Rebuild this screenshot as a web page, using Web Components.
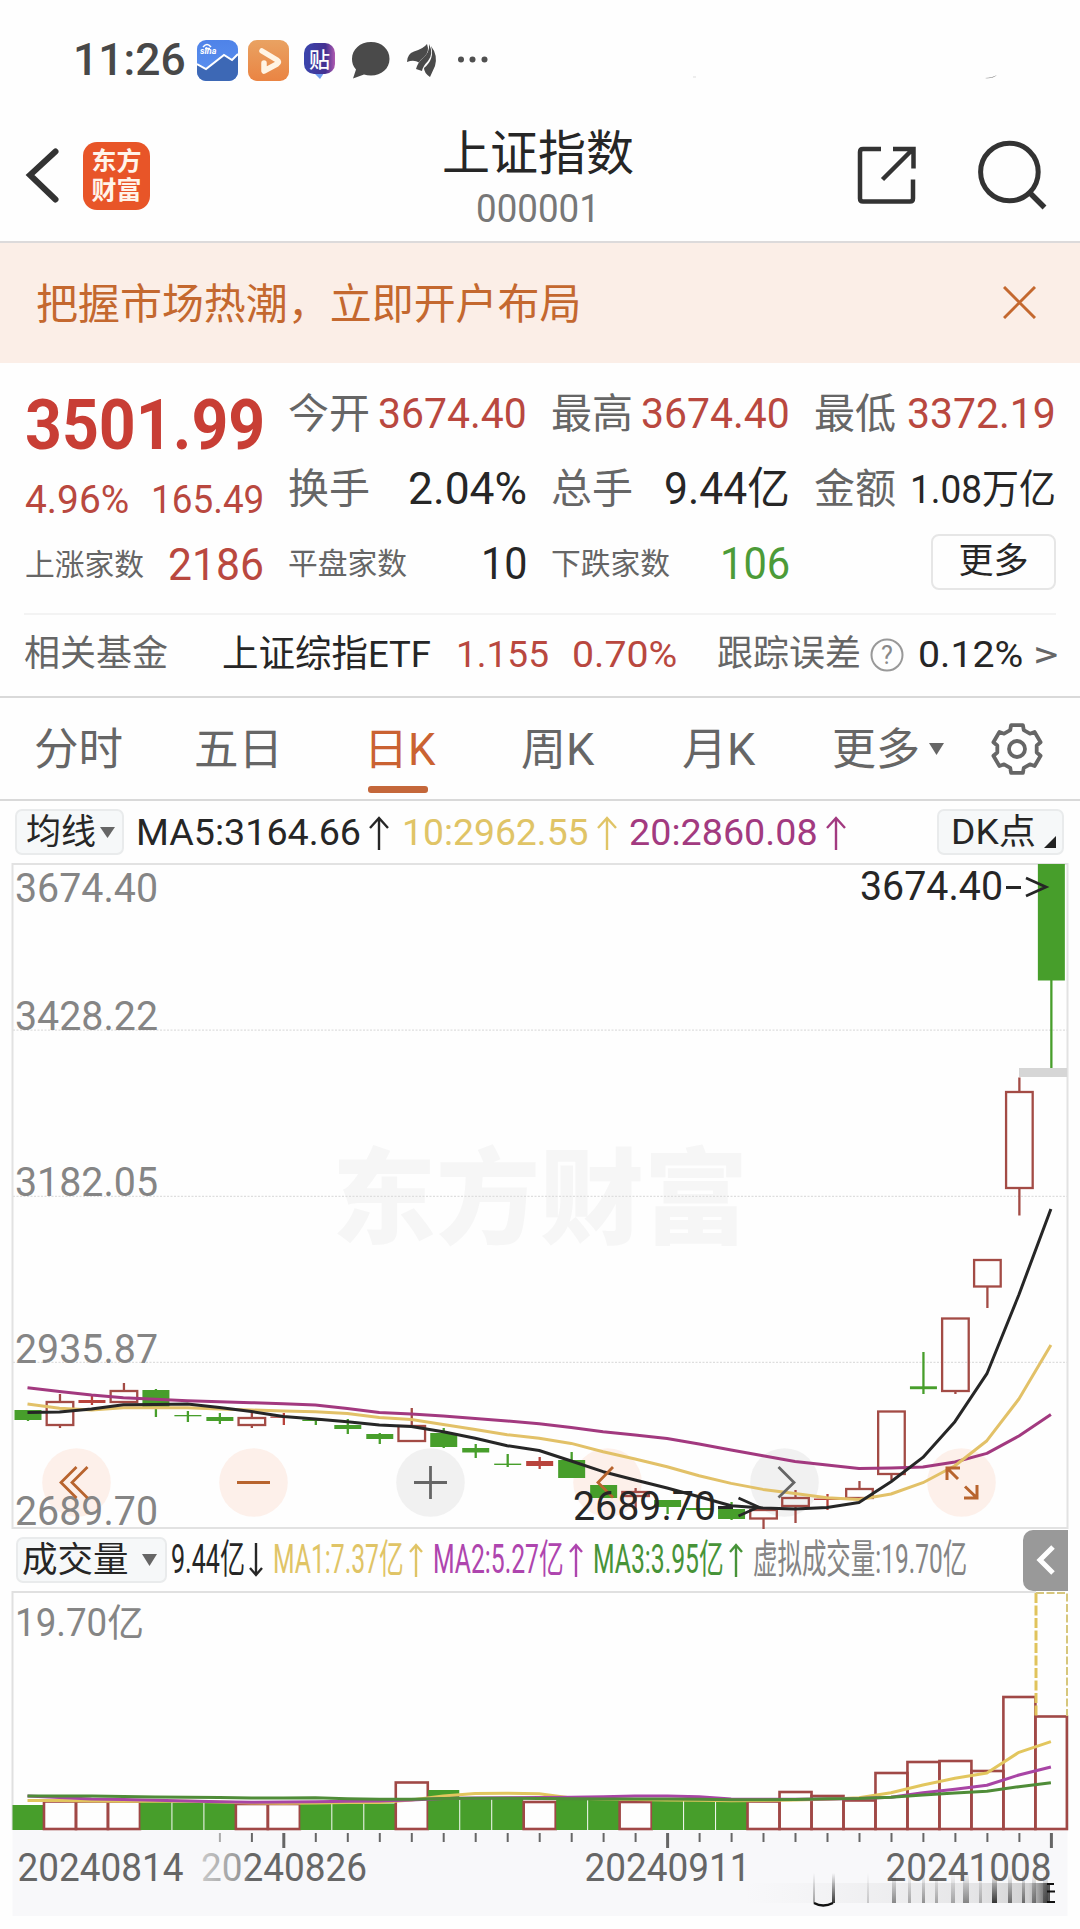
<!DOCTYPE html>
<html lang="zh-CN">
<head>
<meta charset="utf-8">
<title>上证指数 000001</title>
<style>
  html, body {
    margin: 0;
    background: #fefefe;
  }
  body {
    width: 1080px;
    height: 1929px;
    overflow: hidden;
    font-family: Roboto, "Noto Sans CJK SC", sans-serif;
    color: #262626;
    --up: #b9483f;
    --down: #479e2b;
    --brand: #c4682f;
    --muted: #666;
    --ma10: #e0c466;
    --ma20: #a23a80;
  }
</style>
</head>
<body>
<stock-page></stock-page>

<script>
// small base: every component only supplies its template string
class BaseElement extends HTMLElement {
  constructor() {
    super();
    this.attachShadow({ mode: 'open' });
  }
  connectedCallback() {
    const template = document.createElement('template');
    template.innerHTML = this.template();
    this.shadowRoot.replaceChildren(template.content.cloneNode(true));
  }
}

// text squeezed or stretched to an exact width
class FitText extends BaseElement {
  template() {
    return `
      <style>
        :host { display: block; flex: none; white-space: nowrap; line-height: 1.2; }
        span { display: inline-block; transform-origin: 0 50%; }
      </style>
      <span><slot></slot></span>`;
  }
  connectedCallback() {
    super.connectedCallback();
    const w = Number(this.getAttribute('w'));
    const span = this.shadowRoot.querySelector('span');
    const natural = span.offsetWidth;
    this.style.width = w + 'px';
    if (natural) span.style.transform = `scaleX(${w / natural})`;
  }
}
customElements.define('fit-text', FitText);

class StatusBar extends BaseElement {
  template() {
    return `
      <style>
        :host { display: flex; align-items: center; height: 120px; padding-left: 73px; box-sizing: border-box; }
        fit-text { font-size: 44px; font-weight: 500; color: #484848; padding-top: 1px; }
        svg { display: block; margin-left: 11px; }
      </style>
      <fit-text w="113">11:26</fit-text>
      <svg width="806" height="60" viewBox="197 30 806 60">
        <defs>
          <linearGradient id="sky" x2="0" y2="1"><stop stop-color="#4f83e8"/><stop offset="1" stop-color="#5c92f0"/></linearGradient>
          <linearGradient id="org" x2="0" y2="1"><stop stop-color="#e9a262"/><stop offset="1" stop-color="#ea8443"/></linearGradient>
          <linearGradient id="tie" x2="1" y2="0"><stop stop-color="#3a45ad"/><stop offset=".7" stop-color="#443191"/><stop offset="1" stop-color="#b05ab0"/></linearGradient>
        </defs>
        <rect x="197" y="40" width="41" height="41" rx="9" fill="url(#sky)"/>
        <path d="M197 64l9 5 18-14 9 5 5-6v18a9 9 0 0 1-9 9h-23a9 9 0 0 1-9-9z" fill="#3d68b5"/>
        <path d="M197 64l9 5 18-14 8 5 6-6" fill="none" stroke="#fff" stroke-width="2"/>
        <path d="M203 47q4-5 8 0M205 48.500h5" fill="none" stroke="#fff" stroke-width="1.500"/>
        <text x="200" y="54" font-size="9" font-weight="700" font-style="italic" fill="#fff">sina</text>
        <rect x="248" y="40" width="41" height="41" rx="9" fill="url(#org)"/>
        <path d="M262 51l15 9q3 2 0 4l-13 7v-8" fill="none" stroke="#fff4e4" stroke-width="5.500" stroke-linejoin="round" stroke-linecap="round"/>
        <path d="M314 73h10l-4 6z" fill="#6f9df0"/>
        <rect x="304" y="43" width="31" height="31" rx="10" fill="url(#tie)"/>
        <text x="309" y="67" font-size="21" font-weight="500" fill="#fff" textLength="21" lengthAdjust="spacingAndGlyphs">贴</text>
        <path d="M371 42c11 0 18.500 7.500 18.500 17s-8 16.500-18.500 16.500q-4 0-7-1l-11 4 3-9c-3-3-4-7-4-10.500 0-9.500 8-17 19-17z" fill="#4a4a4a"/>
        <path d="M407 62q0-8 7-10.500 9-2.500 13-7.500 3 8-3 13-4 3-5 5.500-5-3-12-.5z" fill="#4a4a4a"/>
        <path d="M416 69q2-7 7-11 7-6 6-14 5 10-1 17-5 5-6 10z" fill="#4a4a4a"/>
        <path d="M431 46q7 9 4 20l-5 11q-6-4-6-9 11-9 7-22z" fill="#4a4a4a"/>
        <g fill="#505050"><circle cx="461" cy="59.500" r="3"/><circle cx="472.500" cy="59.500" r="3"/><circle cx="484.500" cy="59.500" r="3"/></g>
        <path d="M985 78q7 0 12-3-5 4-12 3z" fill="#777"/>
        <path d="M693 77h3" stroke="#ddd"/>
      </svg>`;
  }
}
customElements.define('status-bar', StatusBar);

class AppHeader extends BaseElement {
  template() {
    return `
      <style>
        :host { display: flex; height: 123px; border-bottom: 2px solid #dcdadb; box-sizing: border-box; }
        svg { display: block; flex: none; }
        .logo {
          width: 67px; height: 68px; margin: 22px 0 0 18px; border-radius: 14px;
          background: #e85528; color: #fff4ea; font-weight: 700; font-size: 25px;
          display: grid; align-content: center; justify-items: center;
        }
        .logo fit-text { line-height: 29px; }
        .title { flex: 1; display: flex; flex-direction: column; align-items: center; padding: 5px 0 0 0; }
        .name { font-size: 48px; }
        .code { font-size: 38.500px; color: #777; line-height: 46px; margin-top: 3px; }
        .name, .code { margin-left: 73px; }
        .name { line-height: 58px; }
      </style>
      <svg width="65" height="120" viewBox="0 120 65 120">
        <path d="M55.500 151.500L30 175l25.500 24.500" fill="none" stroke="#333" stroke-width="6" stroke-linecap="round"/>
      </svg>
      <div class="logo"><fit-text w="50">东方</fit-text><fit-text w="50">财富</fit-text></div>
      <div class="title">
        <fit-text class="name" w="192">上证指数</fit-text>
        <fit-text class="code" w="124">${this.getAttribute('code')}</fit-text>
      </div>
      <svg width="227" height="120" viewBox="853 120 227 120" fill="none" stroke="#333" stroke-width="4.500">
        <path d="M881 149h-18q-3 0-3 3v46.500q0 3 3 3h47q3 0 3-3V179.500"/>
        <path d="M893 149h20.500v19.500M912 150l-29.500 29.500"/>
        <circle cx="1009.400" cy="172" r="28.800" stroke-width="5"/>
        <path d="M1029 192l15.500 15.500" stroke-width="5.500"/>
      </svg>`;
  }
}
customElements.define('app-header', AppHeader);

class PromoBanner extends BaseElement {
  template() {
    return `
      <style>
        :host {
          display: flex; align-items: center; justify-content: space-between;
          height: 120px; box-sizing: border-box; padding: 0 44px 0 36px;
          background: #fbeee7; color: var(--brand); font-size: 41.500px;
        }
        fit-text { padding-top: 3px; }
        svg { margin-top: -2px; }
      </style>
      <fit-text w="546"><slot></slot></fit-text>
      <svg width="33" height="33" viewBox="0 0 33 33"><path d="M1 1l31 31M32 1L1 32" stroke="#c4682f" stroke-width="3"/></svg>`;
  }
}
customElements.define('promo-banner', PromoBanner);

// one "label ... value" cell of the quote grid
class QuoteStat extends BaseElement {
  template() {
    const a = (n) => this.getAttribute(n);
    return `
      <style>
        :host { display: flex; align-items: center; justify-content: space-between; height: 75px; }
        .label { color: var(--muted); padding-top: 3px; }
        .value { padding-top: 2px; }
        .small { font-size: 29.500px; }
        .big { font-size: 41px; }
      </style>
      <fit-text class="label ${a('label').length > 2 ? 'small' : 'big'}" w="${a('label').length > 2 ? 119 : 82}">${a('label')}</fit-text>
      <fit-text class="value" w="${a('w')}" style="font-size:${a('size') || 44}px;color:${a('tone') || '#262626'}">${a('value')}</fit-text>`;
  }
}
customElements.define('quote-stat', QuoteStat);

class QuotePanel extends BaseElement {
  template() {
    return `
      <style>
        :host { display: grid; grid-template-columns: 239px 239px 239px 242px; column-gap: 24px; padding: 13px 23px 0 25px; height: 250px; box-sizing: border-box; }
        .price { height: 97px; display: flex; align-items: center; font-size: 70px; font-weight: 700; color: #c83e35; }
        .change { height: 54px; display: flex; align-items: center; justify-content: space-between; font-size: 38.500px; color: var(--up); padding-top: 1px; box-sizing: border-box; }
        .more { display: flex; justify-content: flex-end; padding-top: 8px; }
        .more div {
          width: 125px; height: 56px; box-sizing: border-box; border: 2px solid #e6e6e6; border-radius: 8px;
          display: flex; align-items: center; justify-content: center; font-size: 35px;
        }
        .more fit-text { margin-top: -1px; }
      </style>
      <div>
        <div class="price"><fit-text w="240">3501.99</fit-text></div>
        <div class="change"><fit-text w="104">4.96%</fit-text><fit-text w="113">165.49</fit-text></div>
        <quote-stat label="上涨家数" value="2186" w="96" tone="var(--up)"></quote-stat>
      </div>
      <div>
        <quote-stat label="今开" value="3674.40" w="149" size="42" tone="var(--up)"></quote-stat>
        <quote-stat label="换手" value="2.04%" w="119"></quote-stat>
        <quote-stat label="平盘家数" value="10" w="46"></quote-stat>
      </div>
      <div>
        <quote-stat label="最高" value="3674.40" w="149" size="42" tone="var(--up)"></quote-stat>
        <quote-stat label="总手" value="9.44亿" w="126"></quote-stat>
        <quote-stat label="下跌家数" value="106" w="70" tone="#4c9b38"></quote-stat>
      </div>
      <div>
        <quote-stat label="最低" value="3372.19" w="149" size="42" tone="var(--up)"></quote-stat>
        <quote-stat label="金额" value="1.08万亿" w="146" size="39.500"></quote-stat>
        <div class="more"><div><fit-text w="70">更多</fit-text></div></div>
      </div>`;
  }
}
customElements.define('quote-panel', QuotePanel);

class FundRow extends BaseElement {
  template() {
    return `
      <style>
        :host {
          display: flex; align-items: center; height: 83px; margin: 0 24px 0 24px; padding-bottom: 1px; box-sizing: border-box;
          border-top: 2px solid #f3f3f3; font-size: 37px;
        }
        .m { color: var(--muted); font-size: 36px; }
        .up { color: var(--up); }
        svg { margin: 0 14px 0 9px; flex: none; }
        .arrow { margin-left: 10px; color: var(--muted); }
      </style>
      <fit-text class="m" w="144">相关基金</fit-text>
      <fit-text w="209" style="margin-left:54px">上证综指ETF</fit-text>
      <fit-text class="up" w="93" style="margin-left:25px">1.155</fit-text>
      <fit-text class="up" w="105" style="margin-left:23px">0.70%</fit-text>
      <fit-text class="m" w="144" style="margin-left:40px">跟踪误差</fit-text>
      <svg width="34" height="34"><circle cx="17" cy="17" r="15.500" fill="none" stroke="#999" stroke-width="2"/><text x="17" y="26" font-size="25" text-anchor="middle" fill="#888">?</text></svg>
      <fit-text w="105">0.12%</fit-text>
      <fit-text class="arrow" w="25">&gt;</fit-text>`;
  }
}
customElements.define('fund-row', FundRow);

class PeriodTabs extends BaseElement {
  template() {
    const teeth = [];
    for (let i = 0; i < 6; i++) {
      [[-20, 20], [-14, 24.5], [14, 24.5], [20, 20]].forEach(([d, r]) => {
        const t = (i * 60 + d - 90) * Math.PI / 180;
        teeth.push((26 + r * Math.cos(t)).toFixed(1) + ',' + (26 + r * Math.sin(t)).toFixed(1));
      });
    }
    return `
      <style>
        :host { display: flex; height: 105px; box-sizing: border-box; border: solid #d9d9d9; border-width: 2px 0; padding-left: 34px; font-size: 44.500px; color: var(--muted); }
        fit-text { line-height: 104px; }
        .on { color: #ca6232; display: flex; flex-direction: column; height: 101px; margin-left: 81px; width: 71px; }
        .on i { width: 60px; height: 6.500px; border-radius: 3px; background: #c4673a; margin: -16px 0 0 4px; flex: none; }
        .tri { margin: 45px 0 0 8px; }
        .gear { margin: 25px 0 0 47px; }
        svg { flex: none; }
      </style>
      <fit-text w="89">分时</fit-text>
      <fit-text w="89" style="margin-left:71px">五日</fit-text>
      <div class="on"><fit-text w="71">日K</fit-text><i></i></div>
      <fit-text w="73" style="margin-left:86px">周K</fit-text>
      <fit-text w="73" style="margin-left:88px">月K</fit-text>
      <fit-text w="88" style="margin-left:77px">更多</fit-text>
      <svg class="tri" width="16" height="12"><path d="M1 0h15L8.500 12z" fill="#666"/></svg>
      <svg class="gear" width="52" height="52" fill="none" stroke="#666" stroke-width="3.800">
        <polygon points="${teeth.join(' ')}" stroke-linejoin="round"/>
        <circle cx="26" cy="26" r="8"/>
      </svg>`;
  }
}
customElements.define('period-tabs', PeriodTabs);

// grey pill used for indicator selectors
class PillButton extends BaseElement {
  template() {
    return `
      <style>
        :host {
          display: flex; align-items: center; flex: none; height: 46px; box-sizing: border-box;
          background: #f6f8f9; border: 2px solid #e9ebec; border-radius: 7px; color: #262626;
        }
      </style>
      <slot></slot>`;
  }
}
customElements.define('pill-button', PillButton);

// value followed by a thin trend arrow
class TrendValue extends BaseElement {
  template() {
    const aw = Number(this.getAttribute('aw') || 20);
    const down = this.hasAttribute('down');
    return `
      <style>
        :host { display: flex; align-items: center; flex: none; }
        svg { flex: none; margin-left: ${this.getAttribute('gap') || 8}px; ${down ? 'transform: rotate(180deg);' : ''} }
      </style>
      <fit-text w="${this.getAttribute('w')}"><slot></slot></fit-text>
      <svg width="${aw}" height="34" fill="none" stroke="currentColor" stroke-width="2.400"><path d="M${aw / 2} 34V2M1 ${2 + aw / 2}L${aw / 2} 2L${aw - 1} ${2 + aw / 2}"/></svg>`;
  }
}
customElements.define('trend-value', TrendValue);

class MaRow extends BaseElement {
  template() {
    return `
      <style>
        :host { display: flex; align-items: center; height: 62px; padding-left: 15px; font-size: 37.500px; }
        pill-button { font-size: 35px; }
        pill-button fit-text { padding-top: 2px; }
        trend-value { margin-top: 1px; }
        svg { flex: none; }
      </style>
      <pill-button style="width:109px"><fit-text w="70" style="margin-left:9px">均线</fit-text><svg width="15" height="11" style="margin-left:4px"><path d="M0 0h15L7.500 11z" fill="#666"/></svg></pill-button>
      <trend-value w="225" style="margin-left:12px">MA5:3164.66</trend-value>
      <trend-value w="187" gap="8" style="margin-left:13px;color:var(--ma10)">10:2962.55</trend-value>
      <trend-value w="189" style="margin-left:12px;color:var(--ma20)">20:2860.08</trend-value>
      <pill-button style="width:127px;margin-left:91px"><fit-text w="85" style="margin-left:12px">DK点</fit-text><svg width="12" height="12" style="margin:20px 0 0 8px"><path d="M12 0v12H0z" fill="#222"/></svg></pill-button>`;
  }
}
customElements.define('ma-row', MaRow);

const STEP = 31.98;
const cx = (i) => 27.5 + STEP * i;
const line = (ys, color, w = 3) =>
  `<polyline points="${ys.map((y, i) => cx(i).toFixed(1) + ',' + y).join(' ')}" fill="none" stroke="${color}" stroke-width="${w}" stroke-linejoin="round"/>`;

// [kind, bodyTop, bodyBottom, wickTop, wickBottom]; r = hollow rise, g = fall, R = thin solid rise
const CANDLES = [
  ['g', 1410, 1420, 1410, 1421], ['r', 1402, 1425, 1394, 1428], ['R', 1400, 1403, 1396, 1405], ['r', 1391, 1402, 1383, 1402],
  ['g', 1390, 1409, 1389, 1417], ['g', 1415, 1416.3, 1411, 1422], ['g', 1417, 1421, 1413, 1424], ['r', 1418, 1425, 1413, 1428],
  ['R', 1416.5, 1417.8, 1413, 1425], ['g', 1419.5, 1421, 1419, 1425], ['g', 1425, 1429, 1419, 1434], ['g', 1434, 1439, 1433, 1444],
  ['r', 1426, 1441, 1408, 1442], ['g', 1433, 1447, 1428, 1448], ['g', 1448, 1452.5, 1444, 1458], ['g', 1463.6, 1465, 1454, 1467],
  ['R', 1461, 1466, 1457, 1469], ['g', 1460, 1478, 1452, 1478], ['g', 1485, 1498, 1485, 1498], ['r', 1492, 1496, 1488, 1510],
  ['g', 1500, 1507, 1500, 1514], ['g', 1508, 1510, 1508, 1510], ['g', 1509, 1519, 1502, 1520], ['r', 1510, 1518.5, 1510, 1529],
  ['r', 1498, 1506, 1490, 1523], ['R', 1498.5, 1500, 1494, 1510], ['r', 1489, 1498, 1481, 1498], ['r', 1411.5, 1474, 1411, 1480],
  ['g', 1386.3, 1389.2, 1352, 1394], ['r', 1318.5, 1391, 1318, 1394], ['r', 1260, 1286.5, 1260, 1308], ['r', 1092, 1188, 1077.5, 1215.5],
  ['g', 864, 980.5, 864, 1068]
];
const MA5 = [1412.5, 1412, 1409, 1404.8, 1404.4, 1404, 1407.5, 1411.5, 1416.5, 1419, 1421.7, 1425, 1426.4, 1431.7, 1438.3, 1445.7, 1450.5, 1461, 1471.7, 1480, 1488, 1496.7, 1505.7, 1508, 1509, 1507.5, 1502.5, 1481.7, 1457.4, 1421.7, 1373.7, 1294.7, 1209];
const MA10 = [1404, 1408.3, 1410, 1407.7, 1407.7, 1407.7, 1409, 1410, 1411, 1411.7, 1413.4, 1417.4, 1419.4, 1424.4, 1429.4, 1434.7, 1438.3, 1443.4, 1451.7, 1459, 1466.7, 1475.7, 1483.4, 1489.4, 1493.4, 1497.7, 1499.4, 1494, 1482.7, 1465.7, 1440.7, 1399, 1345];
const MA20 = [1387.7, 1391.4, 1395, 1397.7, 1399.2, 1400.7, 1401.7, 1402.7, 1403.8, 1405, 1408.4, 1412.4, 1414, 1416, 1418.4, 1421, 1423.8, 1427.5, 1431.7, 1435, 1438.4, 1444, 1450, 1455.8, 1461.4, 1465, 1468.4, 1468, 1467, 1462, 1453.4, 1436, 1414.4];

class KlineChart extends BaseElement {
  candle([kind, top, bottom, high, low], i) {
    const x = cx(i) + 0.5;
    const color = kind === 'g' ? '#479e2b' : kind === 'R' ? '#b8433c' : '#a34b45';
    const body = kind === 'r'
      ? `<rect x="${x - 13.3}" y="${top}" width="26.600" height="${bottom - top}" fill="none" stroke="${color}" stroke-width="2.300"/>`
      : `<rect x="${x - 13.5}" y="${top}" width="27" height="${bottom - top}" fill="${color}"/>`;
    // a hollow body keeps its inside clear, so its wick is drawn in two parts
    const wick = kind === 'r' ? `M${x} ${high}V${top}M${x} ${bottom}V${low}` : `M${x} ${high}V${low}`;
    return `<path d="${wick}" stroke="${color}" stroke-width="2.300"/>${body}`;
  }
  label(text, x, y, w, fill = '#858585') {
    return `<text x="${x}" y="${y}" font-size="40.500" fill="${fill}" textLength="${w}" lengthAdjust="spacingAndGlyphs">${text}</text>`;
  }
  template() {
    const knobs = [[76.5, '#fdf0ea'], [253.5, '#fdf0ea'], [430.5, '#f1f1f1'], [607.5, '#fdf0ea'], [784.5, '#f1f1f1'], [961.5, '#fdf0ea']];
    return `
      <style>:host { display: block; } svg { display: block; overflow: visible; }</style>
      <svg width="1080" height="666" viewBox="0 863 1080 666">
        <rect x="12.500" y="864" width="1055" height="664" fill="none" stroke="#e2e2e2" stroke-width="2"/>
        <text x="332" y="1236" font-size="104" font-weight="900" fill="#f6f6f6" textLength="416" lengthAdjust="spacingAndGlyphs">东方财富</text>
        <path d="M13 1030.200H1067M13 1196.300H1067M13 1362.400H1067" stroke="#dedede" stroke-width="1.200" stroke-dasharray="2 1.500"/>
        ${knobs.map(([x, c]) => `<circle cx="${x}" cy="1482.500" r="34.300" fill="${c}"/>`).join('')}
        ${this.label('3674.40', 15, 902, 143)}
        ${this.label('3428.22', 15, 1030, 143)}
        ${this.label('3182.05', 15, 1196, 143)}
        ${this.label('2935.87', 15, 1362.5, 143)}
        ${this.label('2689.70', 15, 1524.5, 143)}
        <rect x="1019" y="1068" width="48" height="9" fill="#d6d6d6"/>
        ${CANDLES.map((c, i) => this.candle(c, i)).join('')}
        ${line(MA20, '#a2397f')}${line(MA10, '#e2c168')}${line(MA5, '#262626')}
        <g fill="none" stroke="#b8642e" stroke-width="2.800">
          <path d="M87.500 1467L72 1482.500l15.500 15.500M76.500 1467L61 1482.500l15.500 15.500M237 1482.500h33M613 1467l-15 15.500 15 15"/>
          <path d="M960 1468h-13v12M948 1469l10 10M964 1498h13v-13M976 1497l-11-10.500" stroke-width="3"/>
          <path d="M414 1482.500h33M430.500 1466v33M778.500 1467l15.500 15.500-15.500 15" stroke="#666"/>
        </g>
        ${this.label('3674.40', 860, 900, 143, '#262626')}
        ${this.label('2689.70', 573, 1520, 143, '#262626')}
        <path d="M1006 887.500h15M1026 878l20 9-20 9M718 1507.500h15M738.500 1498l20 9-20 9" fill="none" stroke="#262626" stroke-width="2.800"/>
      </svg>`;
  }
}
customElements.define('kline-chart', KlineChart);

class VolumeRow extends BaseElement {
  template() {
    return `
      <style>
        :host { display: flex; align-items: center; height: 62px; padding-left: 16px; font-size: 40px; }
        pill-button { width: 151px; font-size: 35.500px; }
        .tab { width: 45px; height: 61px; border-radius: 10px 0 0 10px; background: #999; display: grid; place-items: center; margin-left: 56px; }
      </style>
      <pill-button><fit-text w="107" style="margin-left:4px">成交量</fit-text><svg width="15" height="12" style="margin-left:13px"><path d="M0 0h15L7.500 12z" fill="#666"/></svg></pill-button>
      <trend-value w="74" gap="4" aw="14" down style="margin-left:4px">9.44亿</trend-value>
      <trend-value w="131" gap="5" aw="14" style="margin-left:10px;color:var(--ma10)">MA1:7.37亿</trend-value>
      <trend-value w="131" gap="5" aw="14" style="margin-left:10px;color:#ae45ae">MA2:5.27亿</trend-value>
      <trend-value w="131" gap="5" aw="14" style="margin-left:10px;color:#479338">MA3:3.95亿</trend-value>
      <fit-text w="214" style="margin-left:10px;color:#858585">虚拟成交量:19.70亿</fit-text>
      <div class="tab"><svg width="20" height="32" fill="none" stroke="#fff" stroke-width="5"><path d="M17 3L4 16l13 13"/></svg></div>`;
  }
}
customElements.define('volume-row', VolumeRow);

const VOLUMES = 'g1805 r1801.5 r1801.5 r1801.5 g1802 g1802.5 g1802.5 r1804 r1804 g1803.5 g1803.5 g1803.5 r1782.5 g1790 g1799 g1799 r1802 g1800 g1800 r1802 g1801 g1801 g1801 r1801.5 r1792 r1796 r1800.5 r1773 r1762 r1761 r1771 r1697 r1716.5'.split(' ');
const V5 = [1800.5, 1800.5, 1801, 1801.3, 1801.3, 1801.3, 1802, 1803, 1803.3, 1803, 1802.6, 1802.6, 1800, 1796, 1793.5, 1793.3, 1793.7, 1798, 1799, 1799.5, 1800, 1800.3, 1800.7, 1800.5, 1800, 1799.3, 1797.7, 1792.7, 1785, 1778.3, 1773, 1752.3, 1741.7];
const V10 = [1796, 1797.5, 1799, 1799.5, 1800.3, 1801, 1801.7, 1802.3, 1802, 1801.7, 1801.3, 1801, 1800, 1798.4, 1798, 1797.8, 1797.6, 1797.3, 1796.7, 1796, 1796, 1796.7, 1799, 1799.3, 1799.3, 1799, 1798.6, 1797.3, 1792.7, 1789.3, 1785.3, 1775, 1767];
const V20 = [1796, 1796, 1796, 1796.5, 1797, 1797.3, 1797.6, 1798, 1798, 1797.7, 1798.7, 1799.3, 1799.3, 1798.5, 1798.3, 1798.3, 1798.4, 1798.8, 1799, 1799, 1799, 1799.3, 1799.7, 1799.7, 1799.4, 1798.7, 1798.4, 1797.3, 1795, 1793, 1791.3, 1786.7, 1782.7];

class VolumeChart extends BaseElement {
  bar(v, i) {
    const x = cx(i) - STEP / 2 + 0.5;
    const y = Number(v.slice(1));
    return v[0] === 'g'
      ? `<rect x="${x + 0.5}" y="${y}" width="31" height="${1830 - y}" fill="#479e2b"/>`
      : `<rect x="${x}" y="${y}" width="${i === 32 ? 31.5 : 32}" height="${1829 - y}" fill="none" stroke="#a04846" stroke-width="2.600"/>`;
  }
  template() {
    let ticks = '';
    for (let i = 6; i < 33; i++) {
      const major = i === 8 || i === 20 || i === 32;
      ticks += `<path d="M${(cx(i) + 0.5).toFixed(1)} 1833v${major ? 15 : 9}" stroke="${i === 6 ? '#aaa' : '#666'}" stroke-width="${major ? 3 : 2}"/>`;
    }
    const date = (t, x) => `<text x="${x}" y="1881" font-size="38" fill="#666" textLength="166" lengthAdjust="spacingAndGlyphs">${t}</text>`;
    const streaks = [[813, 2, .4], [832, 3, .9], [867, 2, .2], [892, 4, .5], [908, 3, .35], [922, 3, .45], [935, 3, .35], [951, 4, .35], [963, 6, .5], [979, 3, .3], [992, 5, .9], [1008, 4, .6], [1022, 3, .6], [1032, 4, .5], [1043, 5, .5]];
    return `
      <style>:host { display: block; } svg { display: block; }</style>
      <svg width="1080" height="338" viewBox="0 1591 1080 338">
        <defs>
          <linearGradient id="v" x2="0" y2="1"><stop stop-color="#222" stop-opacity="0"/><stop offset="1" stop-color="#222"/></linearGradient>
          <linearGradient id="h" x2="1" y2="0"><stop stop-color="#bbb" stop-opacity="0"/><stop offset=".75" stop-color="#999" stop-opacity=".2"/><stop offset=".93" stop-color="#888" stop-opacity=".35"/><stop offset="1" stop-color="#222" stop-opacity=".8"/></linearGradient>
          <linearGradient id="fade" gradientUnits="userSpaceOnUse" x1="202" x2="250"><stop stop-color="#c8c8c8"/><stop offset=".8" stop-color="#999"/><stop offset="1" stop-color="#666"/></linearGradient>
        </defs>
        <rect x="12.500" y="1830" width="1055" height="86" fill="#f8f8fa"/>
        <path d="M12.500 1830V1592H1036M1067.500 1830V1716" fill="none" stroke="#e0e0e0" stroke-width="2"/>
        <text x="15" y="1635.500" font-size="38" fill="#858585" textLength="129" lengthAdjust="spacingAndGlyphs">19.70亿</text>
        ${VOLUMES.map((v, i) => this.bar(v, i)).join('')}
        <path d="M1036 1593V1716" stroke="#e0c35c" stroke-width="3" stroke-dasharray="10 2.500"/>
        <path d="M1036 1593H1067V1716" fill="none" stroke="#d6c67c" stroke-width="2" stroke-dasharray="8 2.500"/>
        ${line(V5, '#e2c65e')}${line(V10, '#a845a5')}${line(V20, '#4f8c38')}
        ${ticks}
        ${date('20240814', 17.5)}
        <text x="201" y="1881" font-size="38" fill="url(#fade)" textLength="166" lengthAdjust="spacingAndGlyphs">20240826</text>
        ${date('20240911', 584.5)}
        ${date('20241008', 885.5)}
        <rect x="745" y="1883" width="305" height="20" fill="url(#h)"/>
        ${streaks.map(([x, w, o]) => `<rect x="${x}" y="1873" width="${w}" height="30" fill="url(#v)" opacity="${o}"/>`).join('')}
        <path d="M814 1903q9 5 19 0" fill="none" stroke="#111" stroke-width="2.500"/>
        <path d="M1047 1884h7M1047 1891.500h8M1047 1902h8" stroke="#111" stroke-width="1.800"/>
      </svg>`;
  }
}
customElements.define('volume-chart', VolumeChart);

class StockPage extends BaseElement {
  template() {
    return `
      <style>:host { display: flex; flex-direction: column; width: 1080px; }</style>
      <status-bar></status-bar>
      <app-header code="000001"></app-header>
      <promo-banner>把握市场热潮，立即开户布局</promo-banner>
      <quote-panel></quote-panel>
      <fund-row></fund-row>
      <period-tabs></period-tabs>
      <ma-row></ma-row>
      <kline-chart></kline-chart>
      <volume-row></volume-row>
      <volume-chart></volume-chart>`;
  }
}
customElements.define('stock-page', StockPage);
</script>
</body>
</html>
